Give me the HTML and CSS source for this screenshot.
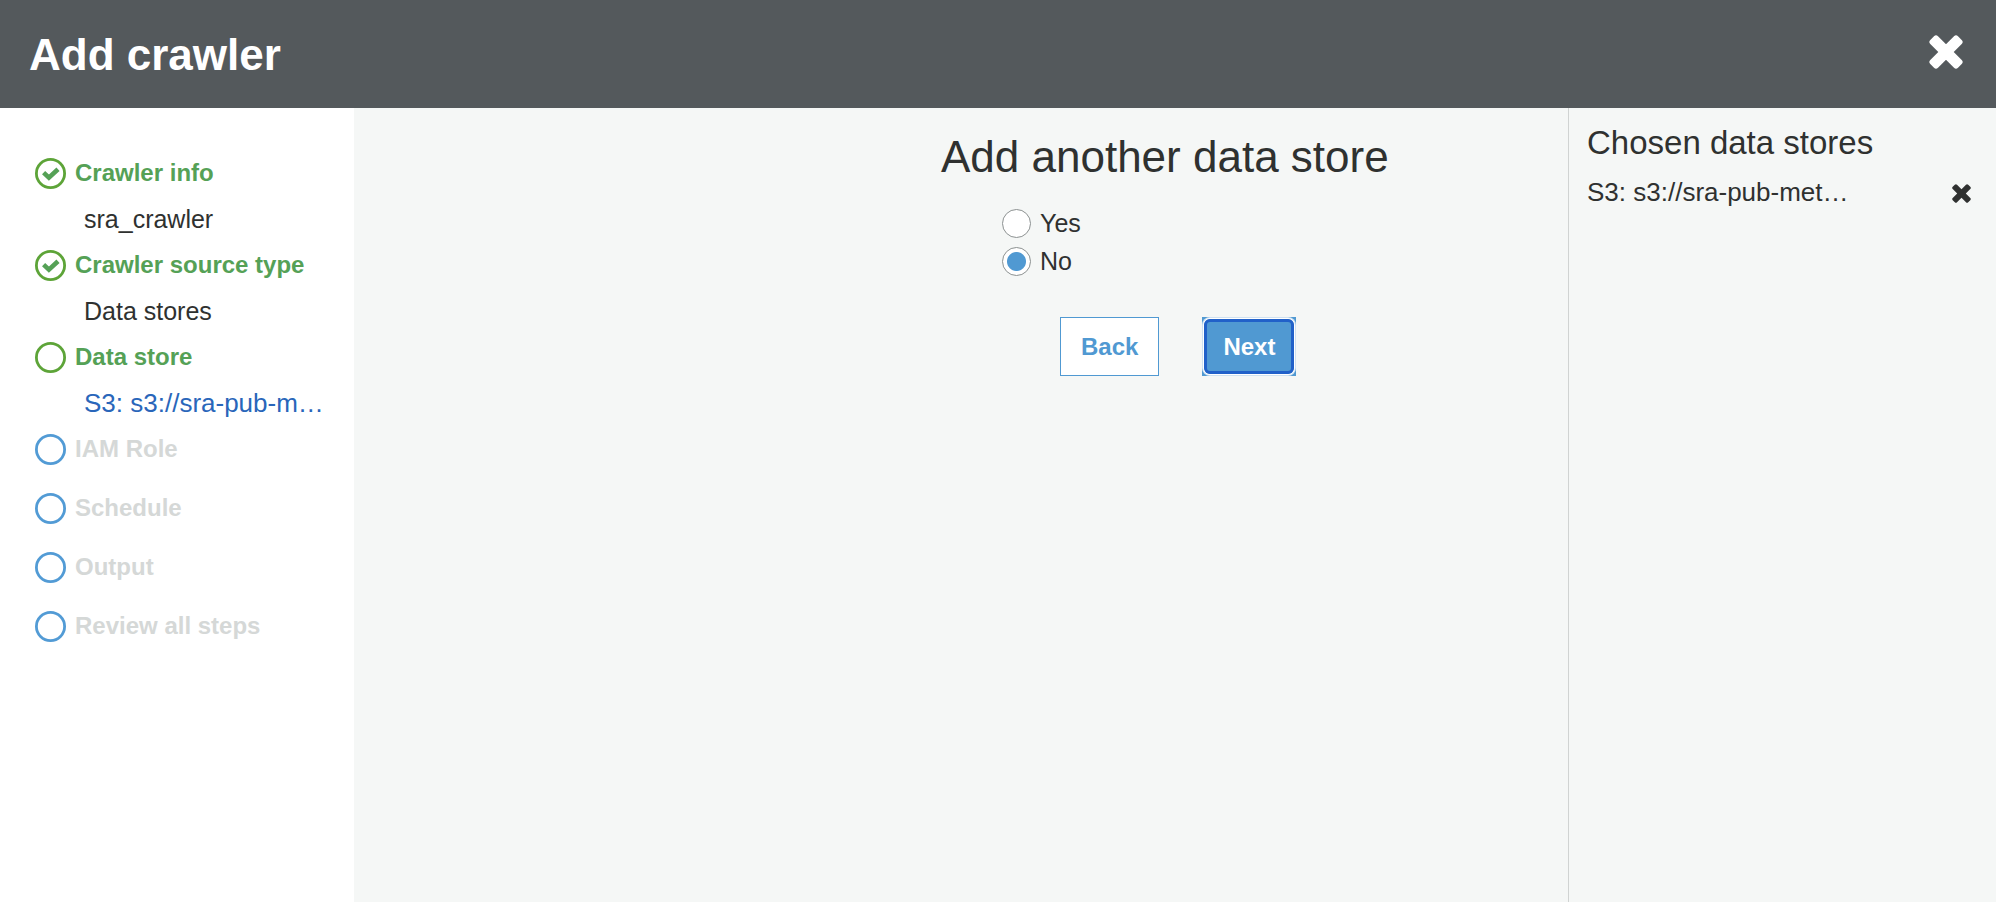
FILE: index.html
```html
<!DOCTYPE html>
<html lang="en">
<head>
<meta charset="utf-8">
<title>Add crawler</title>
<link rel="stylesheet" href="styles.css">
</head>
<body>
<svg class="defs" aria-hidden="true">
  <symbol id="cross" viewBox="0 0 34 34">
    <path d="M5 1.3Q7 -.7 9 1.3L17 9.3L25 1.3Q27 -.7 29 1.3L32.7 5Q34.7 7 32.7 9L24.7 17L32.7 25Q34.7 27 32.7 29L29 32.7Q27 34.7 25 32.7L17 24.7L9 32.7Q7 34.7 5 32.7L1.3 29Q-.7 27 1.3 25L9.3 17L1.3 9Q-.7 7 1.3 5Z" fill="currentColor"/>
  </symbol>
  <symbol id="ring" viewBox="0 0 31 31">
    <circle cx="15.5" cy="15.5" r="14.1" fill="none" stroke="currentColor" stroke-width="2.8"/>
  </symbol>
  <symbol id="ring-check" viewBox="0 0 31 31">
    <circle cx="15.5" cy="15.5" r="14.1" fill="none" stroke="currentColor" stroke-width="2.8"/>
    <path d="M8.6 14.6L13.9 19.6L23 11.2" fill="none" stroke="#55a156" stroke-width="4.6"/>
  </symbol>
</svg>
<header class="header">
  <h1 class="header-title">Add crawler</h1>
  <button class="icon-button header-close" type="button" aria-label="Close"><svg class="cross-large"><use href="#cross"/></svg></button>
</header>
<div class="wizard">
  <nav class="sidebar" aria-label="Steps">
    <ol class="steps">
      <li class="step done"><div class="step-name"><svg class="step-icon"><use href="#ring-check"/></svg>Crawler info</div><div class="step-detail">sra_crawler</div></li>
      <li class="step done"><div class="step-name"><svg class="step-icon"><use href="#ring-check"/></svg>Crawler source type</div><div class="step-detail">Data stores</div></li>
      <li class="step done"><div class="step-name"><svg class="step-icon"><use href="#ring"/></svg>Data store</div><div class="step-detail"><a class="step-link" href="#">S3: s3://sra-pub-m…</a></div></li>
      <li class="step pending"><div class="step-name"><svg class="step-icon"><use href="#ring"/></svg>IAM Role</div></li>
      <li class="step pending"><div class="step-name"><svg class="step-icon"><use href="#ring"/></svg>Schedule</div></li>
      <li class="step pending"><div class="step-name"><svg class="step-icon"><use href="#ring"/></svg>Output</div></li>
      <li class="step pending"><div class="step-name"><svg class="step-icon"><use href="#ring"/></svg>Review all steps</div></li>
    </ol>
  </nav>
  <main class="main">
    <h2 class="question" id="question">Add another data store</h2>
    <div class="options" role="radiogroup" aria-labelledby="question">
      <label class="option"><input class="radio" type="radio" name="another">Yes</label>
      <label class="option"><input class="radio" type="radio" name="another" checked>No</label>
    </div>
    <div class="actions">
      <button class="button" type="button">Back</button>
      <button class="button primary" type="button">Next</button>
    </div>
  </main>
  <aside class="chosen">
    <h2 class="chosen-title">Chosen data stores</h2>
    <div class="chosen-item">
      <span class="chosen-path">S3: s3://sra-pub-met…</span>
      <button class="icon-button chosen-remove" type="button" aria-label="Remove data store"><svg class="cross-small"><use href="#cross"/></svg></button>
    </div>
  </aside>
</div>
</body>
</html>
```

FILE: styles.css
```css
* {
  box-sizing: border-box;
}

body {
  margin: 0;
  min-height: 100vh;
  display: flex;
  flex-direction: column;
  background: #f5f7f6;
  color: #2f3130;
  font-family: "Liberation Sans", Arial, sans-serif;
  font-size: 25px;
  line-height: 38px;
}

h1, h2, ol {
  margin: 0;
  padding: 0;
}

svg {
  display: block;
}

.defs {
  position: absolute;
  width: 0;
  height: 0;
}

.icon-button {
  padding: 0;
  border: 0;
  background: none;
  color: inherit;
  cursor: pointer;
}

.cross-large {
  width: 34px;
  height: 34px;
}

.cross-small {
  width: 19px;
  height: 19px;
}

.header {
  display: flex;
  align-items: center;
  justify-content: space-between;
  height: 108px;
  padding: 0 33px 0 29px;
  background: #54595c;
  color: #fff;
}

.header-title {
  padding-top: 2px;
  font-size: 44px;
  line-height: 50px;
}

.header-close {
  padding-bottom: 4px;
}

.wizard {
  flex: 1;
  display: grid;
  grid-template-columns: 354px 1fr 428px;
}

.sidebar {
  padding: 42px 16px 42px 35px;
  background: #fff;
}

.steps {
  list-style: none;
  line-height: 46px;
}

.step-name {
  display: flex;
  align-items: center;
  gap: 9px;
  font-size: 24px;
  font-weight: bold;
}

.step-icon {
  width: 31px;
  height: 31px;
}

.step-detail {
  height: 46px;
  padding-left: 49px;
  white-space: nowrap;
}

.step-link {
  color: #2966ba;
  font-size: 26px;
  text-decoration: none;
}

.done .step-name {
  color: #55a156;
}

.done .step-icon {
  color: #5da438;
}

.pending {
  margin-bottom: 13px;
}

.pending .step-name {
  color: #d5d8d7;
}

.pending .step-icon {
  color: #529bd5;
}

.main {
  padding: 24px 0 40px calc(50% - 20px);
}

.question {
  font-size: 44px;
  font-weight: normal;
  line-height: 50px;
  white-space: nowrap;
}

.options {
  display: flex;
  flex-direction: column;
  align-items: flex-start;
  padding: 22px 0 37px 61px;
}

.option {
  display: flex;
  align-items: center;
  gap: 9px;
}

.radio {
  appearance: none;
  width: 29px;
  height: 29px;
  margin: 0;
  border: 1px solid #8c9191;
  border-radius: 50%;
  background: #fff;
}

.radio:checked {
  background: radial-gradient(circle, #5099d2 9px, #fff 10px);
}

.actions {
  display: flex;
  gap: 43px;
  padding-left: 119px;
}

.button {
  height: 59px;
  padding: 0 20px;
  border: 1px solid #5099d2;
  background: #fff;
  color: #5099d2;
  font: bold 24px "Liberation Sans", Arial, sans-serif;
  cursor: pointer;
}

.primary {
  position: relative;
  background: #5099d2;
  color: #fff;
}

.primary::after {
  content: "";
  position: absolute;
  inset: 1px;
  border: 3px solid #2161c9;
  border-radius: 6px;
  box-shadow: 0 0 0 1px #fff, 0 0 0 2px #cfe1f1;
}

.chosen {
  padding: 15px 25px 15px 18px;
  border-left: 1px solid #d0d3d2;
}

.chosen-title {
  padding-bottom: 10px;
  font-size: 33px;
  font-weight: normal;
  line-height: 40px;
}

.chosen-item {
  display: flex;
  align-items: center;
  justify-content: space-between;
}

.chosen-path {
  font-size: 26px;
}

.chosen-remove {
  padding-top: 3px;
}
```
